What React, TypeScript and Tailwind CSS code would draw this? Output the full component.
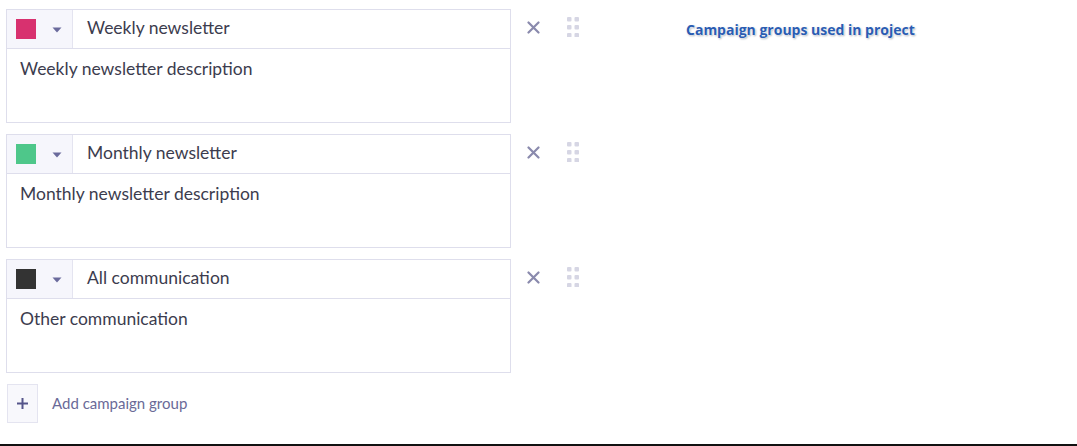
import React from "react";

const groups = [
  { color: "#d8316f", name: "Weekly newsletter", desc: "Weekly newsletter description" },
  { color: "#4ec78a", name: "Monthly newsletter", desc: "Monthly newsletter description" },
  { color: "#333333", name: "All communication", desc: "Other communication" },
];

function Caret() {
  return (
    <svg width="10" height="6" viewBox="0 0 10 6">
      <path d="M0.5 0.5 L9.5 0.5 L5 5.5 Z" fill="#6a6a9c" />
    </svg>
  );
}

function CloseIcon() {
  return (
    <svg width="13" height="13" viewBox="0 0 13 13">
      <path d="M1.5 1.5 L11.5 11.5 M11.5 1.5 L1.5 11.5" stroke="#8a8aad" strokeWidth="2.2" strokeLinecap="round" />
    </svg>
  );
}

function PlusIcon() {
  return (
    <svg width="13" height="13" viewBox="0 0 13 13">
      <path d="M6.5 1 L6.5 12 M1 6.5 L12 6.5" stroke="#55558a" strokeWidth="2" />
    </svg>
  );
}

function DragIcon() {
  const pts = [0, 8, 16];
  return (
    <svg width="12" height="20" viewBox="0 0 12 20">
      {pts.map((y) => (
        <g key={y}>
          <rect x="0" y={y} width="4.5" height="4.5" rx="1" fill="#d6d6e4" />
          <rect x="7.5" y={y} width="4.5" height="4.5" rx="1" fill="#d6d6e4" />
        </g>
      ))}
    </svg>
  );
}

export default function App() {
  return (
    <div
      className="relative w-[1077px] h-[446px] bg-white overflow-hidden"
      style={{ fontFamily: "Lato, 'Open Sans', sans-serif" }}
    >
      <div className="flex pt-[9px] pl-[6px]">
        <div className="flex flex-col w-[505px]">
          {groups.map((g, i) => (
            <div key={i} className="flex mb-[11px]">
              <div className="w-[505px] flex flex-col">
                <div className="flex h-[40px] border border-[#dedeec]">
                  <div className="w-[66px] flex items-center bg-[#f6f6fc] border-r border-[#e4e4f0] pl-[9px]">
                    <div className="w-[20px] h-[20px]" style={{ backgroundColor: g.color }} />
                    <div className="ml-[16px] mt-[2px] flex"><Caret /></div>
                  </div>
                  <div className="flex items-center pl-[14px] pb-[2px] text-[17.5px] text-[#3c3c4e]">{g.name}</div>
                </div>
                <div className="h-[74px] border border-t-0 border-[#dedeec] px-[13px] pt-[9px] text-[17.5px] text-[#3c3c4e] leading-[22px]">
                  {g.desc}
                </div>
              </div>
            </div>
          ))}
          <div className="flex items-center">
            <div className="w-[31px] h-[39px] ml-[1px] border border-[#e4e4f0] bg-[#f8f8fc] flex items-center justify-center">
              <PlusIcon />
            </div>
            <div className="ml-[14px] text-[15px] text-[#6a6a98]">Add campaign group</div>
          </div>
        </div>
        <div className="flex flex-col">
          {groups.map((_, i) => (
            <div key={i} className="h-[125px] flex items-start">
              <div className="ml-[16px] mt-[12px] flex"><CloseIcon /></div>
              <div className="ml-[27px] mt-[8px] flex"><DragIcon /></div>
            </div>
          ))}
        </div>
        <div className="flex">
          <div
            className="ml-[107px] mt-[10px] text-[14px] font-bold text-[#2a5cb2] h-[20px]"
            style={{
              fontFamily: "'Open Sans', sans-serif",
              textShadow: "0 0 2px #fff, 0 0 2px #fff, 1px 1px 2px #9aa0b0",
            }}
          >
            Campaign groups used in project
          </div>
        </div>
      </div>
      <div className="absolute left-0 right-0 bottom-0 h-[2px] bg-[#111]" />
    </div>
  );
}
